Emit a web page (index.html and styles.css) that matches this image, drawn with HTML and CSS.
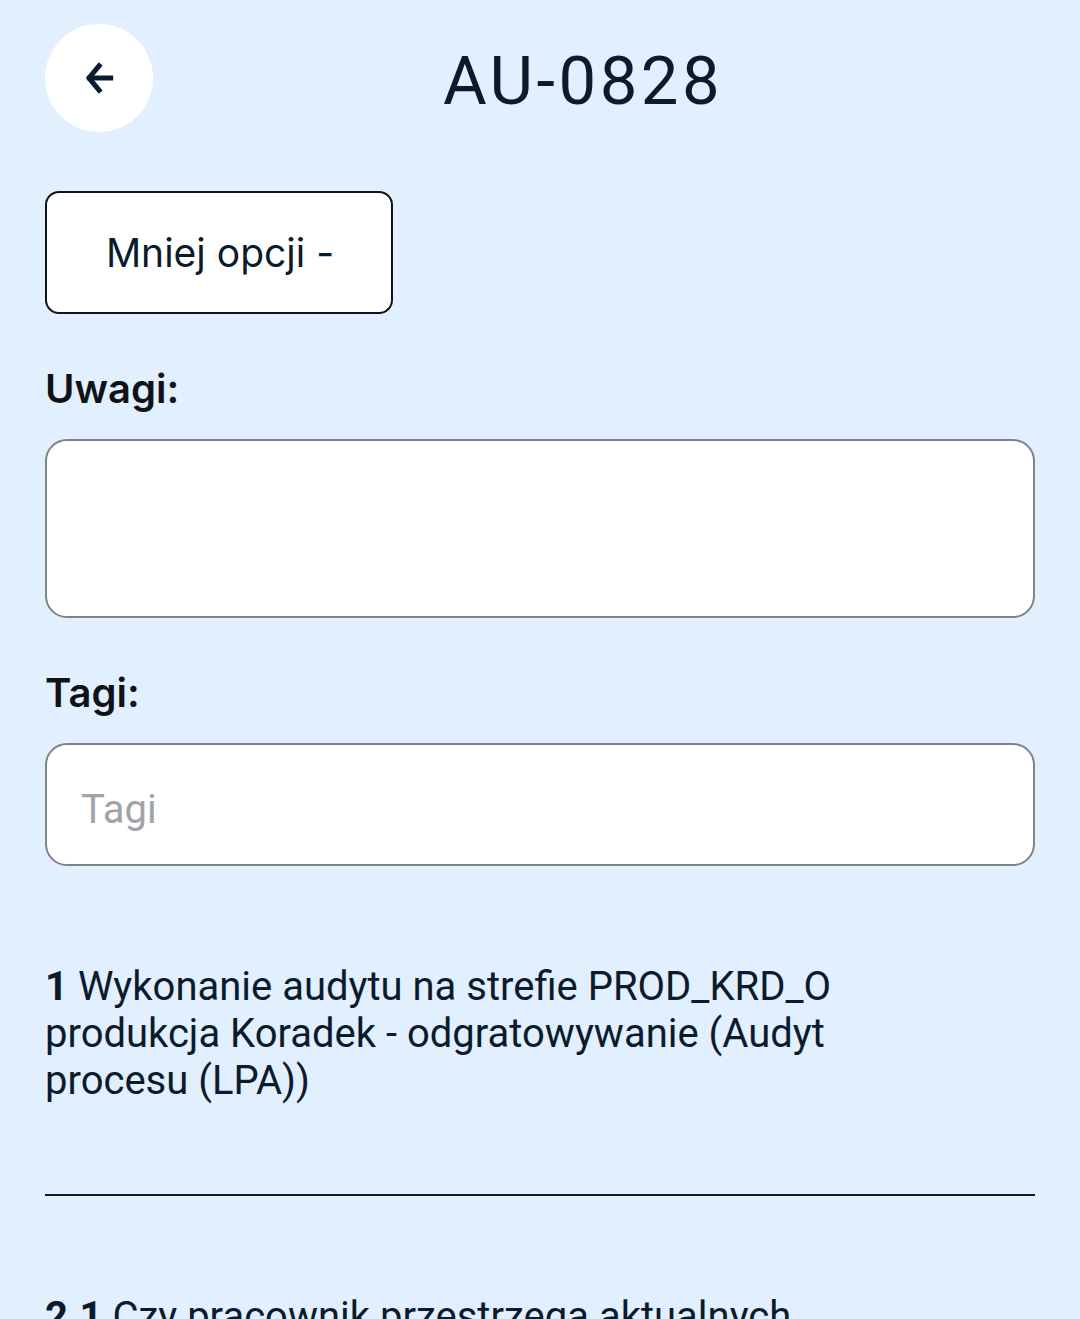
FILE: index.html
```html
<!DOCTYPE html>
<html lang="pl">
<head>
    <meta charset="UTF-8">
    <meta name="viewport" content="width=device-width, initial-scale=1.0">
    <title>AU-0828</title>
    <link rel="stylesheet" href="styles.css">
</head>
<body>
    <div class="page">
        <div class="header">
            <button class="back-btn" aria-label="Wstecz">
                <svg width="40" height="40" viewBox="0 0 24 24" fill="none" stroke="#0b1b2b" stroke-width="3" stroke-linecap="butt" stroke-linejoin="miter">
                    <path d="M20.5 12H5"/>
                    <path d="M13 3.5L6 12l7 8.5"/>
                </svg>
            </button>
            <div class="title">AU-0828</div>
        </div>

        <button class="toggle-btn">Mniej opcji -</button>

        <div class="label">Uwagi:</div>
        <textarea class="notes"></textarea>

        <div class="label">Tagi:</div>
        <input type="text" class="tags" placeholder="Tagi">

        <div class="question">
            <div class="question-text"><b>1</b> Wykonanie audytu na strefie PROD_KRD_O produkcja Koradek - odgratowywanie (Audyt procesu (LPA))</div>
        </div>
        <hr class="divider">
        <div class="question">
            <div class="question-text"><b>2.1</b> Czy pracownik przestrzega aktualnych instrukcji stanowiskowych?</div>
        </div>
    </div>
</body>
</html>
```

FILE: styles.css
```css
body {
    margin: 0;
    padding: 0;
    background-color: #e1effe;
    color: #0b1b2b;
    font-family: 'Inter', 'Roboto', sans-serif;
    overflow: hidden;
}

.page {
    padding: 24px 45px 0;
}

.header {
    display: flex;
    align-items: center;
}

.back-btn {
    width: 108px;
    height: 108px;
    border-radius: 50%;
    border: none;
    background-color: #ffffff;
    display: flex;
    align-items: center;
    justify-content: center;
    padding: 0;
    flex-shrink: 0;
}

.title {
    flex-grow: 1;
    text-align: center;
    font-family: 'Roboto', sans-serif;
    font-size: 67px;
    letter-spacing: 3.5px;
    margin-right: 22px;
    line-height: 80px;
    padding-top: 6px;
    color: #0b1b2b;
}

.toggle-btn {
    display: block;
    margin-top: 59px;
    width: 348px;
    height: 123px;
    border: 2px solid #111418;
    border-radius: 14px;
    background-color: #ffffff;
    font-family: 'Inter', sans-serif;
    font-size: 39px;
    color: #0b1b2b;
    padding: 0 0 0 2px;
}

.label {
    margin-top: 52px;
    font-family: 'Inter', sans-serif;
    font-weight: 600;
    font-size: 40px;
    line-height: 46px;
    color: #0f1318;
}

.notes,
.tags {
    display: block;
    box-sizing: border-box;
    width: 100%;
    margin-top: 27px;
    border: 2px solid #808285;
    border-radius: 22px;
    background-color: #ffffff;
    font-family: 'Roboto', sans-serif;
    font-size: 40px;
    resize: none;
    outline: none;
}

.notes {
    height: 179px;
}

.tags {
    height: 123px;
    padding: 10px 34px 0;
}

.tags::placeholder {
    color: #a0a4a9;
}

.question {
    margin-top: 97px;
    max-width: 800px;
}

.question-text {
    font-family: 'Roboto', sans-serif;
    font-size: 40px;
    line-height: 47px;
    color: #0b1b2b;
}

.question-text b {
    font-weight: 700;
}

.divider {
    margin: 90px 0 0;
    border: none;
    height: 2px;
    background-color: #0b1b2b;
}
```
